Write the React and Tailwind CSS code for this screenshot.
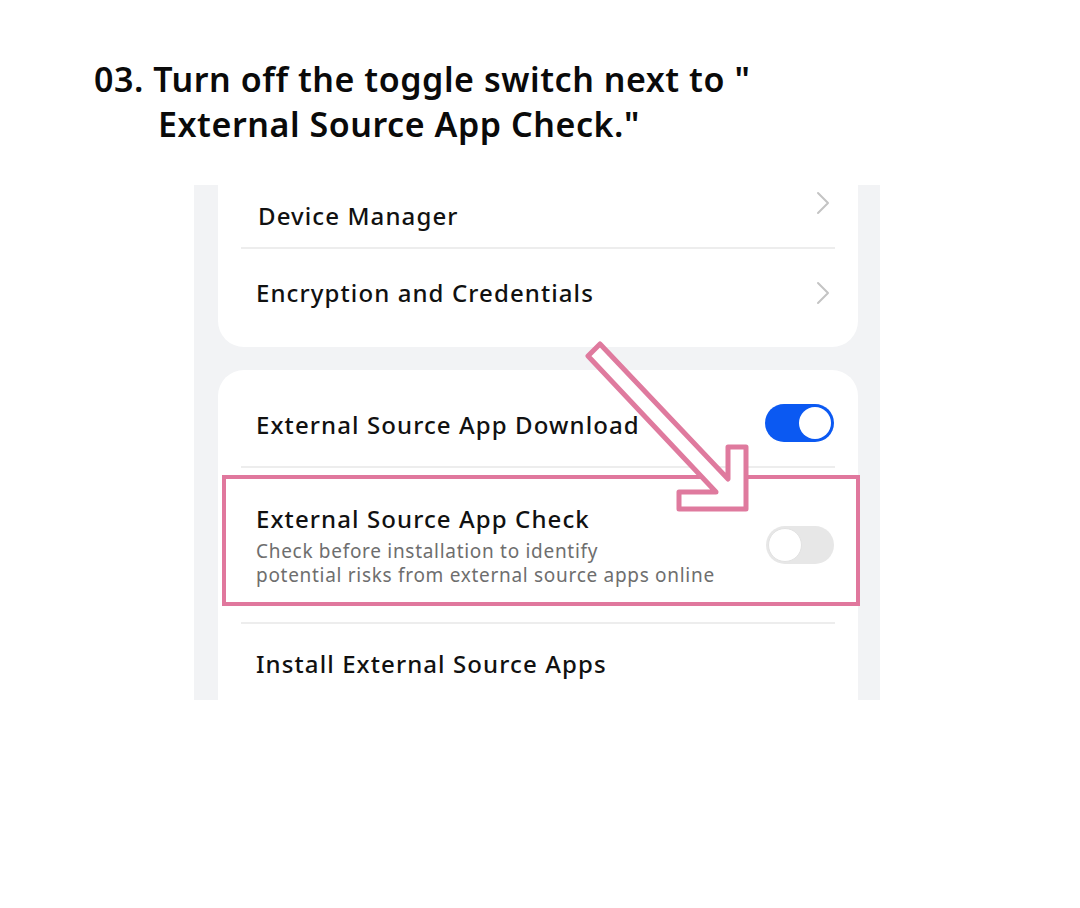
import React from 'react'

const font = { fontFamily: '"Noto Sans", "Open Sans", sans-serif' }

const Chevron = ({ className = '' }) => (
  <svg width="14" height="24" viewBox="0 0 14 24" className={className}>
    <polyline points="2,2 12,12 2,22" fill="none" stroke="#c4c4c4" strokeWidth="2" strokeLinecap="round" strokeLinejoin="round" />
  </svg>
)

const Toggle = ({ on }) => (
  on ? (
    <div className="flex h-[38px] w-[69px] items-center justify-end rounded-full bg-[#0b59f2] pr-[3px]">
      <div className="h-[32px] w-[32px] rounded-full bg-white" />
    </div>
  ) : (
    <div className="flex h-[38px] w-[68px] items-center rounded-full bg-[#e7e7e7] pl-[2px]">
      <div className="h-[34px] w-[34px] rounded-full border border-[#e2e2e2] bg-white" />
    </div>
  )
)

const Divider = () => <div className="mx-[23px] h-[2px] bg-[#ededed]" />

const Title = ({ children }) => (
  <span className="text-[24px] font-medium leading-[30px] tracking-[1.1px] text-[#111]">{children}</span>
)

export default function App() {
  return (
    <div className="relative h-[908px] w-[1080px] overflow-hidden bg-white" style={font}>
      {/* step heading */}
      <h1 className="pl-[158px] pt-[57px] -indent-16 text-[34px] font-semibold leading-[45px] tracking-[0.55px] text-[#0a0a0a]">
        03. Turn off the toggle switch next to "<br />External Source App Check."
      </h1>

      {/* phone screenshot */}
      <div className="relative ml-[194px] mt-[38px] h-[515px] w-[686px] overflow-hidden bg-[#f2f3f5]">
        <div className="ml-[24px] mr-[22px] rounded-b-[26px] bg-white">
          <div className="flex h-[62px] items-center justify-between pl-[40px] pr-[28px]">
            <Title>Device Manager</Title>
            <Chevron className="-mt-[26px]" />
          </div>
          <Divider />
          <div className="flex h-[88px] items-center justify-between pl-[38px] pr-[28px]">
            <Title>Encryption and Credentials</Title>
            <Chevron />
          </div>
          <div className="h-[10px]" />
        </div>

        <div className="ml-[24px] mr-[22px] mt-[23px] rounded-t-[26px] bg-white">
          <div className="flex h-[96px] items-center justify-between pl-[38px] pr-[24px] pt-[14px]">
            <Title>External Source App Download</Title>
            <div className="-mt-[4px]"><Toggle on /></div>
          </div>
          <Divider />
          <div className="flex h-[154px] items-center justify-between pl-[38px] pr-[24px]">
            <div>
              <div><Title>External Source App Check</Title></div>
              <div className="mt-[5px] text-[19px] leading-[24px] tracking-[0.7px] text-[#6e6e6e]">
                Check before installation to identify<br />potential risks from external source apps online
              </div>
            </div>
            <Toggle />
          </div>
          <Divider />
          <div className="flex h-[80px] items-center pl-[38px]">
            <Title>Install External Source Apps</Title>
          </div>
        </div>

        {/* highlight box */}
        <div className="absolute left-[28px] top-[290px] h-[131px] w-[638px] border-[4px] border-[#e0779d]" />
      </div>

      {/* pointing arrow */}
      <svg className="absolute left-0 top-0" width="1080" height="908" viewBox="0 0 1080 908">
        <polygon
          points="600,344 728,479 728,447 746,447 746,509 679,509 679,492 716,492 588,356"
          fill="white" stroke="#df7a9e" strokeWidth="5" strokeLinejoin="round" />
      </svg>
    </div>
  )
}
